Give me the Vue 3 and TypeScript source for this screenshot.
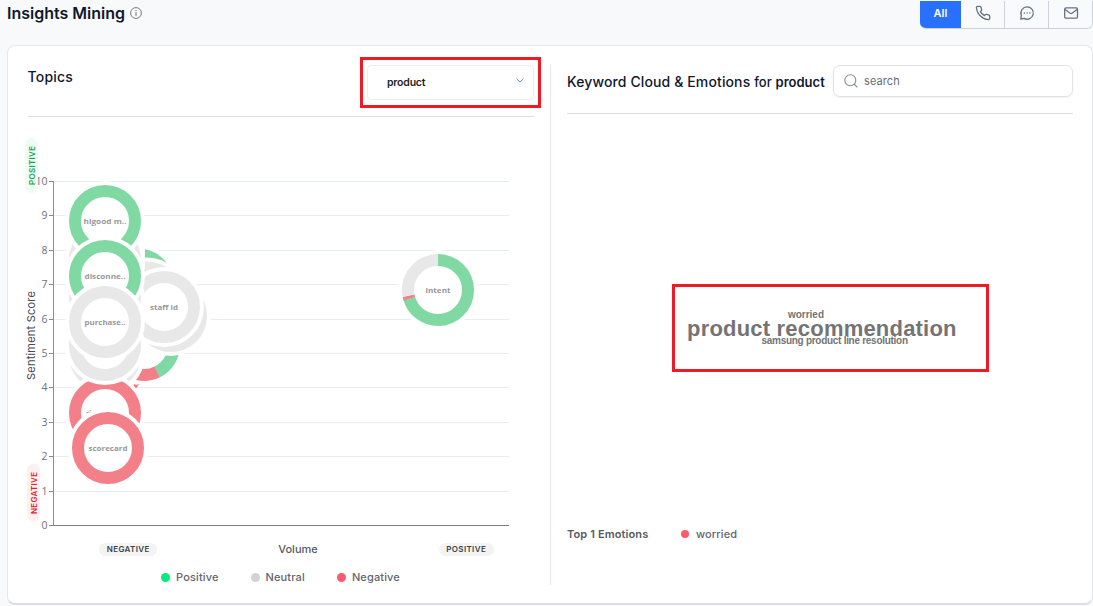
<script setup lang="ts">
interface Slice { color: string; from: number; to: number }
interface Bubble { x: number; y: number; label?: string; width?: number; slices: Slice[] }

const GREEN = '#80d9a2'
const RED = '#f37f88'
const GRAY = '#e8e8e8'
const full = (color: string): Slice[] => [{ color, from: 0, to: 360 }]

const bubbles: Bubble[] = [
  { x: 138, y: 284.5, slices: full(GREEN) },
  { x: 147, y: 297.5, slices: full(GRAY) },
  { x: 144, y: 345, slices: [{ color: GREEN, from: 0, to: 154 }, { color: RED, from: 154, to: 360 }] },
  { x: 171, y: 316, slices: full(GRAY) },
  { x: 164, y: 307, label: 'staff id', width: 28, slices: full(GRAY) },
  { x: 105, y: 355, slices: full(GRAY) },
  { x: 105, y: 413, slices: full(RED) },
  { x: 105, y: 345, slices: full(GRAY) },
  { x: 105, y: 310, slices: full(GRAY) },
  { x: 105, y: 298, slices: full(GRAY) },
  { x: 105, y: 260, slices: full(GRAY) },
  { x: 105, y: 221, label: 'higood m..', width: 43, slices: full(GREEN) },
  { x: 105, y: 276, label: 'disconne..', width: 41, slices: full(GREEN) },
  { x: 105, y: 322, label: 'purchase..', width: 41, slices: full(GRAY) },
  { x: 108, y: 448, label: 'scorecard', width: 39, slices: full(RED) },
  {
    x: 438, y: 290, label: 'intent', width: 25,
    slices: [
      { color: GREEN, from: 0, to: 253 },
      { color: RED, from: 253, to: 259 },
      { color: GRAY, from: 259, to: 360 },
    ],
  },
]

const C = 2 * Math.PI * 30
const dash = (s: Slice) => `${((s.to - s.from) / 360) * C} ${C}`
const ticks = Array.from({ length: 11 }, (_, v) => ({ v, y: 525 - Math.round(v * 34.4) }))
const legend = [
  { name: 'Positive', cls: 'pos' },
  { name: 'Neutral', cls: 'neu' },
  { name: 'Negative', cls: 'neg' },
]
</script>

<template>
  <div class="page">
    <header class="top">
      <h1>Insights Mining</h1>
      <svg class="info" width="12" height="12" viewBox="0 0 12 12" fill="none" stroke="#6b6f76">
        <circle cx="6" cy="6" r="5.4" stroke-width="0.9" />
        <path d="M6 5.2V8.8M6 3.1V4.2" stroke-width="1" />
      </svg>
      <nav class="channels">
        <button class="all">All</button>
        <button>
          <svg width="16" height="16" viewBox="0 0 24 24" fill="none" stroke="#667085" stroke-width="2" stroke-linecap="round" stroke-linejoin="round">
            <path d="M22 16.92v3a2 2 0 0 1-2.18 2 19.8 19.8 0 0 1-8.63-3.07 19.5 19.5 0 0 1-6-6A19.8 19.8 0 0 1 2.12 4.18 2 2 0 0 1 4.11 2h3a2 2 0 0 1 2 1.72c.13.96.36 1.9.7 2.81a2 2 0 0 1-.45 2.11L8.09 9.91a16 16 0 0 0 6 6l1.27-1.27a2 2 0 0 1 2.11-.45c.91.34 1.85.57 2.81.7A2 2 0 0 1 22 16.92z" />
          </svg>
        </button>
        <button>
          <svg width="16" height="16" viewBox="0 0 16 16" fill="none" stroke="#667085" stroke-width="1.3" stroke-linecap="round" stroke-linejoin="round">
            <path d="M2.3 10.3A6.2 6.2 0 1 1 5 13.4L1.8 14.1Z" />
            <path d="M5.3 8h.01M8.1 8h.01M10.9 8h.01" stroke-width="1.5" />
          </svg>
        </button>
        <button>
          <svg width="16" height="16" viewBox="0 0 16 16" fill="none" stroke="#667085" stroke-width="1.3" stroke-linejoin="round">
            <rect x="1.7" y="2.8" width="12.8" height="10.4" rx="1.3" />
            <path d="M1.8 4.3 7.2 8.3a1.5 1.5 0 0 0 1.8 0l5.4-4" />
          </svg>
        </button>
      </nav>
    </header>

    <main class="card">
      <section class="topics">
        <div class="head">
          <h2>Topics</h2>
          <div class="marked">
            <div class="select">
              <span>product</span>
              <svg width="8" height="5" viewBox="0 0 8 5" fill="none" stroke="#6b9bea"><path d="M.5.7 4 4.1 7.5.7" /></svg>
            </div>
          </div>
        </div>

        <svg class="chart" width="514" height="443" viewBox="20 117 514 443">
          <g v-for="t in ticks" :key="t.v">
            <path :d="`M53 ${t.y + 0.5}H509`" :stroke="t.v ? '#e6ebf4' : '#7d7f87'" />
            <path :d="`M49 ${t.y + 0.5}H53`" stroke="#85878e" />
            <text class="tick" x="47.500" :y="t.y + 3.500" :textLength="t.v === 10 ? 12 : 6" lengthAdjust="spacingAndGlyphs">{{ t.v }}</text>
          </g>
          <path d="M53.5 181V526" stroke="#8d8f97" />
          <rect x="25" y="138" width="13" height="55" rx="6.5" fill="#eefcf3" />
          <text class="side green" transform="translate(35 185) rotate(-90)" textLength="39">POSITIVE</text>
          <rect x="27" y="463.500" width="13" height="58" rx="6.5" fill="#fef0f0" />
          <text class="side red" transform="translate(37 514) rotate(-90)" textLength="42">NEGATIVE</text>
          <text class="ytitle" transform="translate(35 380) rotate(-90)" textLength="89">Sentiment Score</text>

          <g v-for="(b, i) in bubbles" :key="i">
            <circle :cx="b.x" :cy="b.y" r="40" fill="#fff" />
            <circle
              v-for="s in b.slices" :key="s.from" :cx="b.x" :cy="b.y" r="30" fill="none"
              :stroke="s.color" stroke-width="12" :stroke-dasharray="dash(s)"
              :transform="`rotate(${s.from - 90} ${b.x} ${b.y})`"
            />
            <text v-if="b.label" class="label" :x="b.x" :y="b.y + 2.500" :textLength="b.width" lengthAdjust="spacingAndGlyphs">{{ b.label }}</text>
          </g>
          <path d="M141 246H145V270L141 264Z" fill="#fff" />
          <path d="M134 384Q136 385.500 139 384L137 387.500L136 388.500L133.500 385.500Z" fill="#f37f88" />
          <path d="M86.500 413l2-1 .8.8M89.500 411l1.500-.5" stroke="#999" fill="none" />

          <rect x="99" y="543" width="58" height="13" rx="6.5" fill="#f3f3f4" />
          <text class="pill" x="128" y="552" textLength="42.500">NEGATIVE</text>
          <text class="volume" x="298" y="553" textLength="39.500">Volume</text>
          <rect x="439" y="543" width="55" height="13" rx="6.5" fill="#f3f3f4" />
          <text class="pill" x="466" y="552" textLength="39.500">POSITIVE</text>
        </svg>

        <ul class="legend">
          <li v-for="l in legend" :key="l.name"><i :class="l.cls" />{{ l.name }}</li>
        </ul>
      </section>

      <section class="keywords">
        <div class="khead">
          <h2>Keyword Cloud &amp; Emotions <span>for <b>product</b></span></h2>
          <div class="search">
            <svg width="14" height="14" viewBox="0 0 14 14" fill="none" stroke="#8a8f98" stroke-width="1.1" stroke-linecap="round">
              <circle cx="6.300" cy="6.300" r="5.500" /><path d="M10.500 10.500 13 13" />
            </svg>
            <span>search</span>
          </div>
        </div>
        <div class="cloud">
          <svg width="317" height="88" viewBox="672 284 317 88">
            <rect x="673.500" y="285.500" width="314" height="85" fill="none" stroke="#ed1c24" stroke-width="3" />
            <text x="788" y="318" font-size="10" textLength="36">worried</text>
            <text x="687" y="336" font-size="22" textLength="269.500">product recommendation</text>
            <text x="761.500" y="344" font-size="10" textLength="146.500">samsung product line resolution</text>
          </svg>
        </div>
        <div class="emotions">
          <strong>Top 1 Emotions</strong>
          <span><i class="neg" />worried</span>
        </div>
      </section>
    </main>
  </div>
</template>

<style>
html, body { margin: 0; overflow: hidden; background: #f8f9fb; }
</style>

<style scoped>
* { box-sizing: border-box; }
.page { height: 606px; background: #f8f9fb; font-family: Inter, "Liberation Sans", sans-serif; color: #10182b; overflow: hidden; }
.top { height: 45px; display: flex; align-items: flex-start; padding-left: 7px; }
h1 { margin: 3px 0 0; font-size: 16px; line-height: 20px; font-weight: 600; letter-spacing: 0; width: 119px; white-space: nowrap; }
.info { margin: 7px 0 0 4px; }
.channels { margin: 1px 0 0 auto; display: flex; height: 28px; width: 173px; border: 1px solid #cdd1dc; border-top: 0; border-left: 0; border-radius: 0 0 6px 6px; overflow: hidden; }
.channels button { width: 44px; flex: none; height: 27px; padding: 0; border: 0; border-left: 1px solid #cdd1dc; background: #f9fafc; display: flex; align-items: center; justify-content: center; font: 600 11px Inter, sans-serif; }
.channels .all { width: 41px; height: 28px; background: #2970ff; color: #fff; border: 0; padding-bottom: 4px; }
.channels .all + button { border: 0; width: 43px; }
.channels svg { margin-top: -3px; }
.card { margin-left: 7px; width: 1086px; height: 560px; display: flex; background: #fff; border: 1px solid #e6e8ee; border-bottom: 2px solid #dcdde3; border-radius: 8px; padding-top: 19px; }
.topics { width: 543px; height: 520px; padding-left: 20px; border-right: 1px solid #e5e7ec; }
.head { width: 506px; height: 52px; border-bottom: 1px solid #dedfe2; display: flex; justify-content: space-between; }
h2 { margin: 0; font-size: 14px; line-height: 20px; font-weight: 500; white-space: nowrap; }
.head h2 { margin: 2px 0 0 -0.5px; letter-spacing: 0.2px; }
.marked { margin: -8px -7px 0 0; width: 181px; height: 51px; border: 3px solid #ed1c24; padding: 5px 4px; }
.select { height: 35px; border: 1px solid #ebedf1; border-radius: 4px; display: flex; align-items: center; justify-content: space-between; padding: 0 9px 0 19px; font-size: 10.5px; font-weight: 600; letter-spacing: -0.2px; color: #1c1f26; }
.select span { margin-top: -1px; }
.select svg { margin-top: -5px; }
.chart { display: block; margin-left: -8px; }
.chart text { font-family: Inter, sans-serif; }
.chart .tick { font-family: "Open Sans", sans-serif; font-size: 10px; fill: #6e7079; text-anchor: end; }
.chart .side { font-size: 8px; font-weight: 600; }
.green { fill: #16a34a; }
.red { fill: #dc2626; }
.chart .ytitle { font-size: 11px; fill: #464a53; }
.chart .label { font-family: "Open Sans", sans-serif; font-size: 7.3px; font-weight: 700; fill: #999; text-anchor: middle; }
.chart .pill { font-size: 8px; font-weight: 600; fill: #404247; text-anchor: middle; }
.chart .volume { font-size: 11px; font-weight: 450; fill: #565a63; text-anchor: middle; }
.legend { list-style: none; margin: 9px 0 0; padding: 0 0 0 133px; display: flex; gap: 32px; font-size: 11px; font-weight: 500; line-height: 16px; letter-spacing: 0.14px; color: #62656d; }
.legend li { display: flex; align-items: center; }
i { width: 9px; height: 9px; border-radius: 50%; margin-right: 6px; }
.pos { background: #00ed7b; }
.neu { background: #d2d2d2; }
.neg { background: #ff5a6c; }
.keywords { width: 522px; padding-left: 16px; display: flex; flex-direction: column; height: 520px; }
.khead { width: 506px; height: 49px; border-bottom: 1px solid #dedfe2; display: flex; justify-content: space-between; }
.khead h2 { margin-top: 7px; letter-spacing: 0.12px; }
.khead span { font-size: 13px; }
.khead b { font-weight: 600; letter-spacing: 0; }
.search { width: 240px; height: 32px; border: 1px solid #e0e2e6; border-radius: 7px; box-shadow: 0 1px 2px #1018280d; display: flex; align-items: center; gap: 6px; padding-left: 10px; color: #666b75; letter-spacing: 0.1px; }
.khead .search span { font-size: 11px; }
.cloud { height: 412px; padding: 170px 0 0 105px; flex: none; }
.cloud svg { display: block; }
.cloud text { font-family: "Liberation Sans", Arial, sans-serif; font-weight: 700; fill: #747474; }
.emotions { display: flex; align-items: center; font-size: 11px; line-height: 16px; letter-spacing: 0.12px; color: #565a63; }
.emotions strong { width: 114px; font-weight: 600; }
.emotions span { display: flex; align-items: center; font-weight: 500; letter-spacing: 0.1px; color: #62656d; }
.emotions i { width: 8px; height: 8px; margin-right: 7px; }
</style>
